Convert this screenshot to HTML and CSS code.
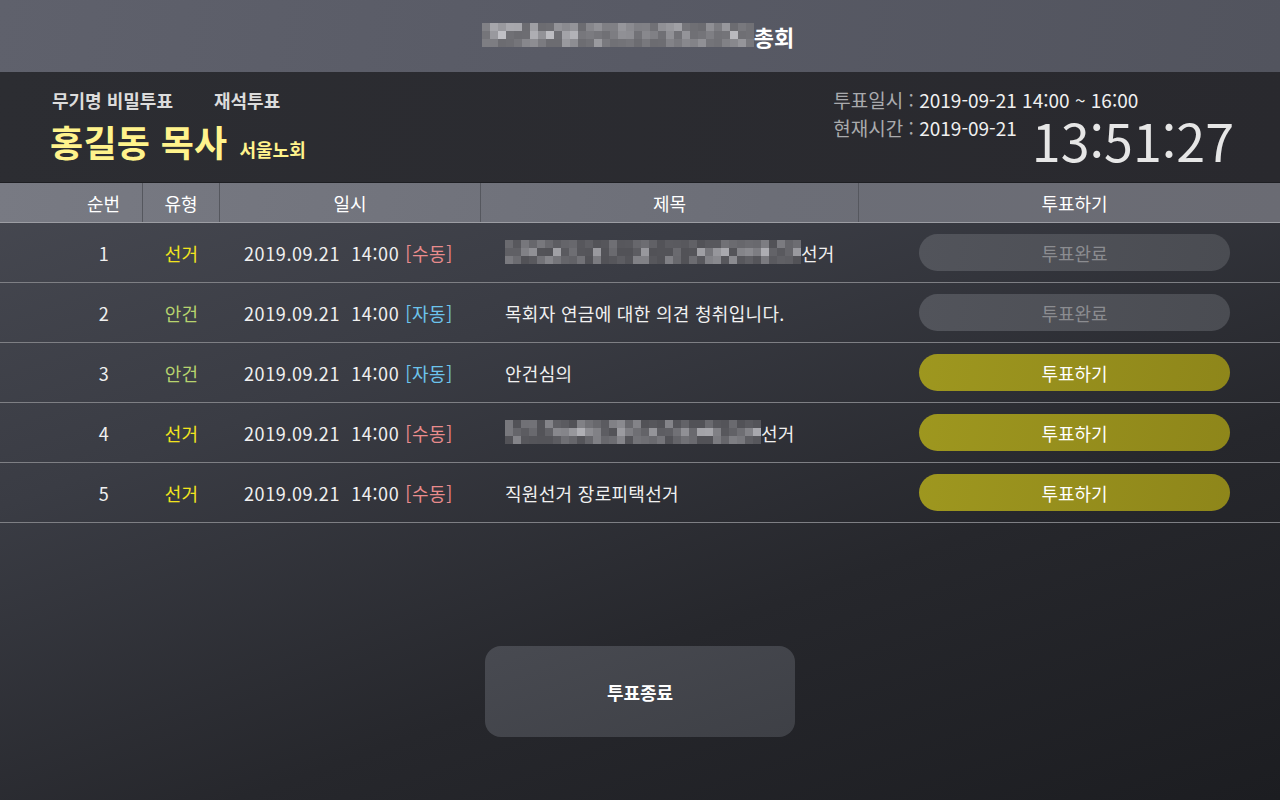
FILE: index.html
```html
<!DOCTYPE html>
<html lang="ko">
<head>
<meta charset="utf-8">
<title>투표</title>
<link rel="stylesheet" href="styles.css">
</head>
<body>
<div class="page">
  <header class="titlebar">
    <h1 class="title"><span class="mosaic mosaic-light" data-cols="34" data-seed="7"></span>총회</h1>
  </header>

  <section class="info">
    <div class="info-left">
      <div class="tags"><span>무기명 비밀투표</span><span>재석투표</span></div>
      <div class="person"><span class="name">홍길동 목사</span><span class="org">서울노회</span></div>
    </div>
    <div class="info-right">
      <div class="line"><span class="lbl">투표일시 : </span><span class="val">2019-09-21 14:00 ~ 16:00</span></div>
      <div class="line now"><span><span class="lbl">현재시간 : </span><span class="val">2019-09-21</span></span><span class="clock">13:51:27</span></div>
    </div>
  </section>

  <div class="table">
    <div class="thead">
      <div class="th c-no">순번</div>
      <div class="th">유형</div>
      <div class="th">일시</div>
      <div class="th">제목</div>
      <div class="th c-act">투표하기</div>
    </div>

    <div class="tr">
      <div class="td c-no">1</div>
      <div class="td type-elect">선거</div>
      <div class="td date">2019.09.21&nbsp;&nbsp;14:00 <span class="manual">[수동]</span></div>
      <div class="td subject"><span class="mosaic" data-cols="37" data-seed="11"></span>선거</div>
      <div class="td c-act"><button class="btn done">투표완료</button></div>
    </div>
    <div class="tr">
      <div class="td c-no">2</div>
      <div class="td type-agenda">안건</div>
      <div class="td date">2019.09.21&nbsp;&nbsp;14:00 <span class="auto">[자동]</span></div>
      <div class="td subject">목회자 연금에 대한 의견 청취입니다.</div>
      <div class="td c-act"><button class="btn done">투표완료</button></div>
    </div>
    <div class="tr">
      <div class="td c-no">3</div>
      <div class="td type-agenda">안건</div>
      <div class="td date">2019.09.21&nbsp;&nbsp;14:00 <span class="auto">[자동]</span></div>
      <div class="td subject">안건심의</div>
      <div class="td c-act"><button class="btn vote">투표하기</button></div>
    </div>
    <div class="tr">
      <div class="td c-no">4</div>
      <div class="td type-elect">선거</div>
      <div class="td date">2019.09.21&nbsp;&nbsp;14:00 <span class="manual">[수동]</span></div>
      <div class="td subject"><span class="mosaic" data-cols="32" data-seed="23"></span>선거</div>
      <div class="td c-act"><button class="btn vote">투표하기</button></div>
    </div>
    <div class="tr">
      <div class="td c-no">5</div>
      <div class="td type-elect">선거</div>
      <div class="td date">2019.09.21&nbsp;&nbsp;14:00 <span class="manual">[수동]</span></div>
      <div class="td subject">직원선거 장로피택선거</div>
      <div class="td c-act"><button class="btn vote">투표하기</button></div>
    </div>
  </div>

  <div class="footer">
    <button class="end-btn">투표종료</button>
  </div>
</div>
<script src="script.js"></script>
</body>
</html>
```

FILE: styles.css
```css
* { box-sizing: border-box; }
html, body { margin: 0; padding: 0; }
body {
  width: 1280px;
  height: 800px;
  overflow: hidden;
  font-family: "Noto Sans CJK KR", "Noto Sans", sans-serif;
  color: #f2f2f2;
  background: linear-gradient(160deg, #4d4f58 0%, #3a3c44 40%, #26272c 70%, #1c1d21 100%);
}
.page { width: 1280px; height: 800px; display: flex; flex-direction: column; }

.titlebar {
  height: 72px;
  display: flex;
  align-items: center;
  justify-content: center;
  background: linear-gradient(100deg, #5f616c 0%, #585a65 50%, #52545e 100%);
}
.title {
  margin: 0;
  font-size: 22px;
  font-weight: 700;
  color: #ffffff;
  display: flex;
  align-items: center;
}
.title .mosaic { margin-left: -4px; margin-right: 0; }

.mosaic {
  display: inline-grid;
  grid-template-rows: repeat(3, 8px);
  grid-auto-flow: column;
  grid-auto-columns: 8px;
  vertical-align: middle;
  margin-top: -2px;
}
.mosaic i { display: block; width: 8px; height: 8px; }

.info {
  height: 110px;
  background: linear-gradient(100deg, #2c2d32 0%, #29292e 100%);
  display: flex;
  justify-content: space-between;
  padding: 0 46px 0 50px;
}
.info-left { padding-top: 14px; }
.tags { display: flex; gap: 41px; padding-left: 2px; font-size: 18px; font-weight: 700; color: #dcdcdc; line-height: 28px; }
.person { display: flex; align-items: baseline; margin-top: 3px; }
.name { font-size: 36px; font-weight: 700; color: #fff38c; line-height: 48px; letter-spacing: 0.3px; }
.org { font-size: 18px; font-weight: 700; color: #fff38c; margin-left: 12px; }

.info-right { padding-top: 14px; font-size: 19px; line-height: 28px; }
.lbl { color: #a9aaad; }
.val { color: #f0f0f0; }
.line.now { display: flex; align-items: flex-start; }
.clock {
  font-size: 52px;
  line-height: 50px;
  color: #e6e6e6;
  margin-left: 15px;
  margin-top: 1px;
}

.table { display: flex; flex-direction: column; }
.thead, .tr {
  display: grid;
  grid-template-columns: 143px 77px 261px 378px 1fr;
}
.thead {
  height: 41px;
  border-top: 1px solid #1e1f23;
  border-bottom: 1px solid #9c9da3;
  background: linear-gradient(100deg, #787a83 0%, #6c6e77 60%, #6a6b73 100%);
}
.th {
  font-size: 18px;
  color: #ffffff;
  display: flex;
  align-items: center;
  justify-content: center;
  border-right: 1px solid #55575e;
}
.th:last-child { border-right: none; }
.c-no { padding-left: 65px; }
.c-act { padding-left: 10px; }

.tr {
  height: 60px;
  border-bottom: 1px solid #7e7f84;
}
.td {
  font-size: 18px;
  letter-spacing: 0.3px;
  color: #f0f0f0;
  display: flex;
  align-items: center;
  justify-content: center;
}
.td.date { letter-spacing: 0.6px; padding-right: 4px; }
.td.subject { justify-content: flex-start; padding-left: 24px; }
.type-elect { color: #f2e41e; }
.type-agenda { color: #b7d36e; }
.manual { color: #e98b8c; margin-left: 6px; }
.auto { color: #6cc4ec; margin-left: 6px; }

.btn {
  width: 311px;
  height: 37px;
  border: none;
  border-radius: 19px;
  font-family: inherit;
  font-size: 18px;
  padding: 0;
}
.btn.done { background: linear-gradient(100deg, #52545b, #4a4c52); color: #8b8c90; }
.btn.vote { background: linear-gradient(100deg, #9e971f, #8e861a); color: #ffffff; }

.footer { display: flex; justify-content: center; padding-top: 123px; }
.end-btn {
  width: 310px;
  height: 91px;
  border: none;
  border-radius: 16px;
  background: linear-gradient(160deg, #484a51, #3e4046);
  color: #ffffff;
  font-family: inherit;
  font-size: 18px;
  font-weight: 700;
}
```

FILE: script.js
```js
(function () {
  var els = document.querySelectorAll('.mosaic');
  els.forEach(function (el) {
    var cols = parseInt(el.getAttribute('data-cols'), 10);
    var seed = parseInt(el.getAttribute('data-seed'), 10);
    var light = el.classList.contains('mosaic-light');
    function rnd() {
      seed = (seed * 1103515245 + 12345) % 2147483648;
      return seed / 2147483648;
    }
    var base = light ? 108 : 82;
    var span = light ? 100 : 95;
    for (var c = 0; c < cols; c++) {
      for (var r = 0; r < 3; r++) {
        var v = rnd();
        v = v * v;
        if (r !== 1) v *= 0.6;
        var g = Math.round(base + v * span);
        var cell = document.createElement('i');
        cell.style.background = 'rgb(' + g + ',' + g + ',' + (g + 5) + ')';
        el.appendChild(cell);
      }
    }
  });
})();
```
